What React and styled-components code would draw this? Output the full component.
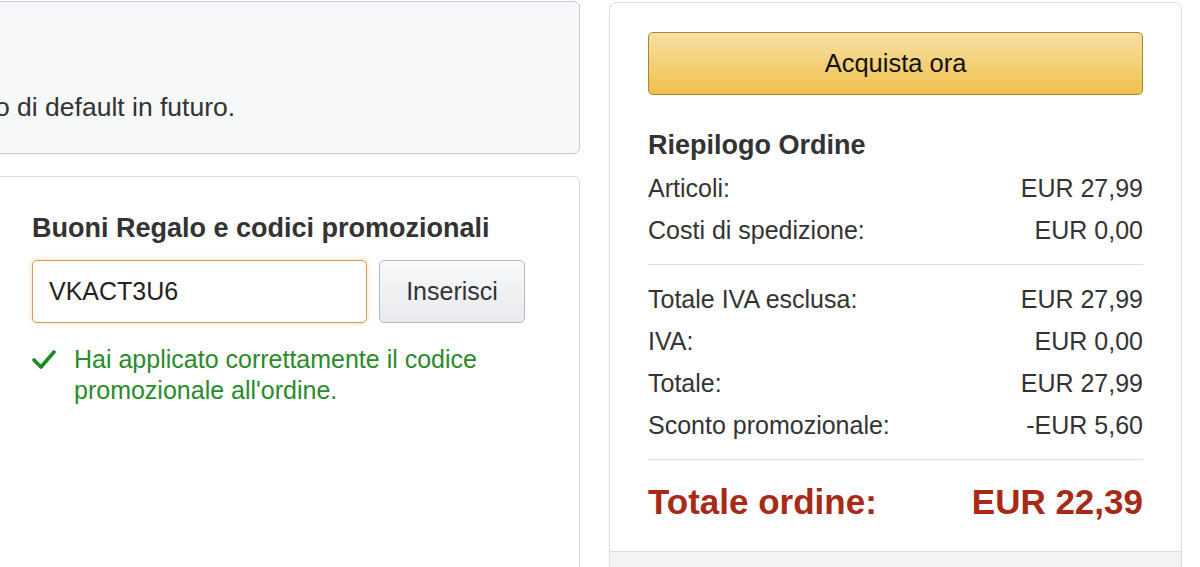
import React from 'react'
import styled, { createGlobalStyle } from 'styled-components'

const GlobalStyle = createGlobalStyle`
  html, body {
    margin: 0;
    padding: 0;
    background: #fff;
    overflow: hidden;
  }
  body {
    font-family: "Liberation Sans", Arial, sans-serif;
    color: #333;
  }
`

const Page = styled.div`
  width: 1200px;
  height: 567px;
  display: flex;
  align-items: flex-start;
  gap: 29px;
  overflow: hidden;
`

const LeftColumn = styled.div`
  width: 582px;
  margin-left: -2px;
  padding-top: 1px;
  display: flex;
  flex-direction: column;
  gap: 22px;
`

const NoticeBox = styled.div`
  height: 153px;
  box-sizing: border-box;
  background: #f6f8fa;
  border: 1px solid #c3ccd6;
  border-radius: 0 6px 6px 0;
  display: flex;
  flex-direction: column;
  justify-content: flex-end;
  padding-bottom: 31px;
`

const NoticeText = styled.p`
  margin: 0;
  font-size: 26.5px;
  line-height: 30px;
  text-indent: -4px;
  color: #333;
`

const PromoBox = styled.div`
  height: 420px;
  box-sizing: border-box;
  border: 1px solid #dcdcdc;
  border-right-color: #d4d4d4;
  border-radius: 0 6px 0 0;
  padding: 35px 0 0 33px;
`

const PromoTitle = styled.h4`
  margin: 0 0 16px;
  font-size: 27px;
  line-height: 32px;
  font-weight: bold;
  color: #333;
`

const PromoRow = styled.div`
  display: flex;
  gap: 12px;
`

const CodeInput = styled.div`
  width: 335px;
  height: 63px;
  box-sizing: border-box;
  border: 1px solid #d39b5e;
  border-radius: 5px;
  box-shadow: 0 0 4px 1px rgba(228, 160, 90, 0.3);
  background: #fff;
  padding: 0 16px;
  display: flex;
  align-items: center;
  font-size: 25px;
  color: #222;
`

const GrayButton = styled.div`
  width: 146px;
  height: 63px;
  box-sizing: border-box;
  border: 1px solid #b5b8bd;
  border-radius: 5px;
  background: linear-gradient(to bottom, #f8f9fa, #e8eaed);
  display: flex;
  align-items: center;
  justify-content: center;
  font-size: 25px;
  color: #333;
`

const Success = styled.div`
  display: flex;
  gap: 18px;
  margin-top: 21px;
  color: #2a8a2c;
  font-size: 25px;
  line-height: 31px;
`

const CheckIcon = styled.svg`
  flex: none;
  width: 24px;
  height: 22px;
  margin-top: 5px;
`

const SummaryCard = styled.div`
  width: 573px;
  height: 600px;
  margin-top: 2px;
  box-sizing: border-box;
  border: 1px solid #dddddd;
  border-radius: 8px 8px 0 0;
  display: flex;
  flex-direction: column;
`

const SummaryBody = styled.div`
  height: 548px;
  box-sizing: border-box;
  padding: 29px 38px 0 38px;
`

const BuyButton = styled.div`
  height: 63px;
  box-sizing: border-box;
  border: 1px solid #a88734;
  border-radius: 5px;
  background: linear-gradient(to bottom, #f7dfa5, #f0c14b);
  display: flex;
  align-items: center;
  justify-content: center;
  font-size: 25.5px;
  color: #111;
`

const SummaryTitle = styled.h3`
  margin: 34px 0 6px;
  font-size: 27px;
  line-height: 32px;
  font-weight: bold;
  color: #333;
`

const Row = styled.div`
  display: flex;
  justify-content: space-between;
  height: 42px;
  align-items: center;
  font-size: 25px;
  color: #333;
`

const Divider = styled.hr`
  border: 0;
  border-top: 1px solid #dcdcdc;
  margin: 13px 0 13px;
`

const TotalRow = styled.div`
  display: flex;
  justify-content: space-between;
  align-items: center;
  height: 56px;
  margin-top: 14px;
  font-size: 35px;
  font-weight: bold;
  color: #a72a17;
`

const Footer = styled.div`
  flex: 1;
  background: #f3f3f3;
  border-top: 1px solid #dddddd;
`

const firstRows = [
  ['Articoli:', 'EUR 27,99'],
  ['Costi di spedizione:', 'EUR 0,00'],
]

const secondRows = [
  ['Totale IVA esclusa:', 'EUR 27,99'],
  ['IVA:', 'EUR 0,00'],
  ['Totale:', 'EUR 27,99'],
  ['Sconto promozionale:', '-EUR 5,60'],
]

const App = () => (
  <>
    <GlobalStyle />
    <Page>
      <LeftColumn>
        <NoticeBox>
          <NoticeText>o di default in futuro.</NoticeText>
        </NoticeBox>
        <PromoBox>
          <PromoTitle>Buoni Regalo e codici promozionali</PromoTitle>
          <PromoRow>
            <CodeInput>VKACT3U6</CodeInput>
            <GrayButton>Inserisci</GrayButton>
          </PromoRow>
          <Success>
            <CheckIcon viewBox="0 0 24 22">
              <path d="M2 11 L9 18 L22 3" fill="none" stroke="#1c8a24" strokeWidth="3.6" strokeLinecap="round" strokeLinejoin="round" />
            </CheckIcon>
            <span>
              Hai applicato correttamente il codice
              <br />
              promozionale all'ordine.
            </span>
          </Success>
        </PromoBox>
      </LeftColumn>
      <SummaryCard>
        <SummaryBody>
          <BuyButton>Acquista ora</BuyButton>
          <SummaryTitle>Riepilogo Ordine</SummaryTitle>
          {firstRows.map(([label, value]) => (
            <Row key={label}>
              <span>{label}</span>
              <span>{value}</span>
            </Row>
          ))}
          <Divider />
          {secondRows.map(([label, value]) => (
            <Row key={label}>
              <span>{label}</span>
              <span>{value}</span>
            </Row>
          ))}
          <Divider />
          <TotalRow>
            <span>Totale ordine:</span>
            <span>EUR 22,39</span>
          </TotalRow>
        </SummaryBody>
        <Footer />
      </SummaryCard>
    </Page>
  </>
)

export default App
